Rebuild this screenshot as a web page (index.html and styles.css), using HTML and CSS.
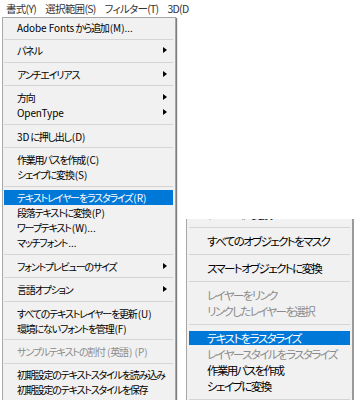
FILE: index.html
```html
<!DOCTYPE html>
<html lang="ja">
<head>
<meta charset="utf-8">
<link rel="stylesheet" href="styles.css">
</head>
<body>
<div class="menubar">
  <span class="mb-item">書式(Y)</span>
  <span class="mb-item">選択範囲(S)</span>
  <span class="mb-item">フィルター(T)</span>
  <span class="mb-item">3D(D</span>
</div>
<div class="stage">
  <div class="menu menu-left">
    <div class="item"><span class="lat">Adobe Fonts</span> から追加<span class="key">(M)...</span></div>
    <div class="sep"></div>
    <div class="item sub">パネル</div>
    <div class="sep"></div>
    <div class="item sub">アンチエイリアス</div>
    <div class="sep"></div>
    <div class="item sub">方向</div>
    <div class="item sub"><span class="lat">OpenType</span></div>
    <div class="sep"></div>
    <div class="item"><span class="lat">3D</span> に押し出し<span class="key">(D)</span></div>
    <div class="sep"></div>
    <div class="item">作業用パスを作成<span class="key">(C)</span></div>
    <div class="item">シェイプに変換<span class="key">(S)</span></div>
    <div class="sep"></div>
    <div class="item active">テキストレイヤーをラスタライズ<span class="key">(R)</span></div>
    <div class="item">段落テキストに変換<span class="key">(P)</span></div>
    <div class="item">ワープテキスト<span class="key">(W)...</span></div>
    <div class="item">マッチフォント<span class="key">...</span></div>
    <div class="sep"></div>
    <div class="item sub">フォントプレビューのサイズ</div>
    <div class="sep"></div>
    <div class="item sub">言語オプション</div>
    <div class="sep"></div>
    <div class="item">すべてのテキストレイヤーを更新<span class="key">(U)</span></div>
    <div class="item">環境にないフォントを管理<span class="key">(F)</span></div>
    <div class="sep"></div>
    <div class="item disabled">サンプルテキストの割付 <span class="key">(</span>英語<span class="key">) (P)</span></div>
    <div class="sep"></div>
    <div class="item">初期設定のテキストスタイルを読み込み</div>
    <div class="item">初期設定のテキストスタイルを保存</div>
  </div>
  <div class="menu menu-right">
    <div class="frag"><span>フレームに変換</span></div>
    <div class="sep"></div>
    <div class="item">すべてのオブジェクトをマスク</div>
    <div class="sep"></div>
    <div class="item">スマートオブジェクトに変換</div>
    <div class="sep"></div>
    <div class="item disabled">レイヤーをリンク</div>
    <div class="item disabled">リンクしたレイヤーを選択</div>
    <div class="sep"></div>
    <div class="item active">テキストをラスタライズ</div>
    <div class="item disabled">レイヤースタイルをラスタライズ</div>
    <div class="item">作業用パスを作成</div>
    <div class="item">シェイプに変換</div>
    <div class="sep"></div>
  </div>
</div>
</body>
</html>
```
FILE: styles.css
```css
html, body {
  margin: 0;
  padding: 0;
  background: #ffffff;
  overflow: hidden;
  width: 358px;
  height: 400px;
}
body {
  font-family: "Noto Sans CJK JP", "Noto Sans", sans-serif;
  font-feature-settings: "palt";
  color: #000;
}
.menubar {
  height: 17px;
  display: flex;
  align-items: center;
  padding-left: 6px;
  gap: 9px;
  font-size: 10.5px;
  letter-spacing: -0.7px;
  color: #333;
  white-space: nowrap;
}
.stage {
  display: flex;
  align-items: flex-start;
}
.menu {
  background: #f1f1f1;
  box-sizing: border-box;
}
.menu-left {
  margin-left: 2px;
  width: 174px;
  height: 400px;
  border: 1px solid #a7a7a7;
  border-bottom: none;
  padding: 2px 2px 0 1px;
  box-shadow: 1px 1px 1px #7d7d7d;
  font-size: 10px;
  letter-spacing: -1.2px;
}
.lat {
  letter-spacing: -0.1px;
}
.key {
  letter-spacing: 0;
  padding-left: 1px;
}
.menu-left .item {
  height: 15px;
  line-height: 15px;
  padding-left: 13px;
  position: relative;
  white-space: nowrap;
}
.menu-left .sep {
  height: 8.4px;
  display: flex;
  align-items: center;
}
.sep::before {
  content: "";
  display: block;
  width: 100%;
  height: 1px;
  background: #d4d4d4;
}
.item.active {
  background: #0078d7;
  color: #fff;
}
.item.disabled {
  color: #8c8c8c;
}
.item.sub::after {
  content: "";
  position: absolute;
  right: 6px;
  top: 4px;
  border-left: 4px solid #000;
  border-top: 3.5px solid transparent;
  border-bottom: 3.5px solid transparent;
}
.menu-right {
  margin-left: 10px;
  margin-top: 202px;
  width: 168px;
  height: 190px;
  border-left: 1px solid #a7a7a7;
  border-right: 2px solid #9a9a9a;
  padding: 0 2px 0 2px;
  font-size: 11.5px;
  letter-spacing: -1.6px;
}
.frag {
  height: 3px;
  overflow: hidden;
  position: relative;
  padding-left: 18px;
}
.frag span {
  display: block;
  line-height: 16px;
  margin-top: -13px;
  white-space: nowrap;
}
.menu-right .sep {
  height: 11px;
  display: flex;
  align-items: center;
}
.menu-right .item {
  height: 16px;
  line-height: 16px;
  padding-left: 18px;
  white-space: nowrap;
}
.menu-right .item.active {
  height: 14px;
  line-height: 14px;
  margin: 1px 0;
}
```
